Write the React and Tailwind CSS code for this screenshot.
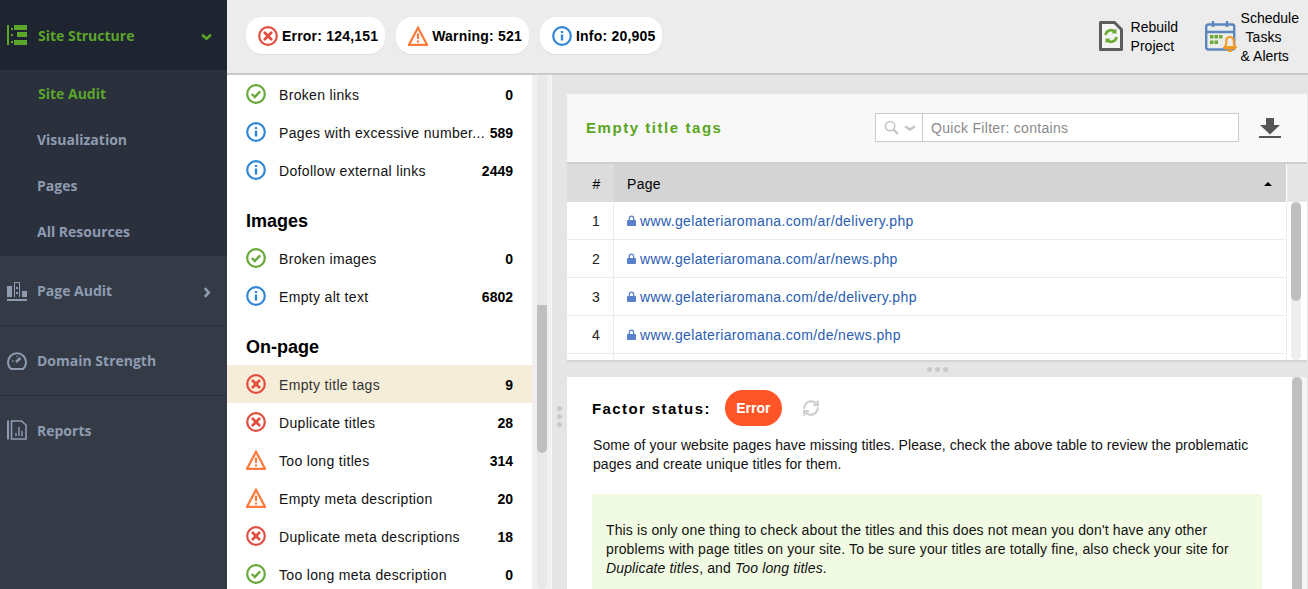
import React from 'react';
import { RefreshCw } from 'lucide-react';

const arial = "font-['Liberation_Sans',Arial,sans-serif]";
const sideFont = "font-['Open_Sans',sans-serif]";

function ErrorIcon({ className = 'w-5 h-5' }) {
  return (
    <svg viewBox="0 0 20 20" className={className}>
      <circle cx="10" cy="10" r="8.8" fill="none" stroke="#e04f3f" strokeWidth="2.200" />
      <path d="M6.800 6.800l6.400 6.400M13.200 6.800l-6.400 6.400" stroke="#e04f3f" strokeWidth="2.800" strokeLinecap="round" />
    </svg>
  );
}

function WarningIcon({ className = 'w-5 h-5' }) {
  return (
    <svg viewBox="0 0 20 20" className={className}>
      <path d="M10 1.800L1 18.800h18z" fill="none" stroke="#ff7a3a" strokeWidth="2.200" strokeLinejoin="miter" />
      <path d="M10 7.500v5.500M10 14.600v2" stroke="#ff7a3a" strokeWidth="2.200" />
    </svg>
  );
}

function InfoIcon({ className = 'w-5 h-5' }) {
  return (
    <svg viewBox="0 0 20 20" className={className}>
      <circle cx="10" cy="10" r="8.800" fill="none" stroke="#2f87d6" strokeWidth="2.200" />
      <path d="M10 8.600v6M10 5v2" stroke="#2f87d6" strokeWidth="2.400" />
    </svg>
  );
}

function OkIcon({ className = 'w-5 h-5' }) {
  return (
    <svg viewBox="0 0 20 20" className={className}>
      <circle cx="10" cy="10" r="8.800" fill="none" stroke="#68a83a" strokeWidth="2.200" />
      <path d="M5.800 10l3 3 5.400-5.600" fill="none" stroke="#68a83a" strokeWidth="2.400" />
    </svg>
  );
}

const icons = { error: ErrorIcon, warn: WarningIcon, info: InfoIcon, ok: OkIcon };

function StructureIcon() {
  return (
    <svg viewBox="0 0 20 20" className="w-5 h-5 text-[#5aa52a]" fill="currentColor">
      <rect x="0" y="0" width="2" height="20" />
      <rect x="4" y="3" width="2" height="2" />
      <rect x="4" y="9" width="2" height="2" />
      <rect x="4" y="16" width="2" height="2" />
      <rect x="7" y="0" width="13" height="5" />
      <rect x="10" y="7" width="10" height="5" />
      <rect x="7" y="15" width="13" height="5" />
    </svg>
  );
}

function PageAuditIcon() {
  return (
    <svg viewBox="0 0 20 20" className="w-5 h-5 text-[#8e9bb0]" fill="currentColor">
      <rect x="0" y="5" width="5" height="11" />
      <path d="M7 1h6v15h-1V2H8v14H7z" />
      <rect x="9" y="6" width="2" height="2" />
      <rect x="9" y="11" width="2" height="2" />
      <rect x="15" y="10" width="5" height="6" />
      <rect x="0" y="18" width="20" height="2" />
    </svg>
  );
}

function GaugeIcon() {
  return (
    <svg viewBox="0 0 20 20" className="w-5 h-5 text-[#8e9bb0]" fill="none" stroke="currentColor">
      <path d="M4 18A9 9 0 1 1 16 18z" strokeWidth="2" strokeLinejoin="round" />
      <path d="M9 11l4.500-4" strokeWidth="2.400" />
      <path d="M5 10h1.500M10 5v1" strokeWidth="1.400" />
    </svg>
  );
}

function ReportsIcon() {
  return (
    <svg viewBox="0 0 20 20" className="w-5 h-5 text-[#8e9bb0]" fill="none" stroke="currentColor">
      <path d="M1 0.500v19" strokeWidth="2" />
      <path d="M4.500 1h10l4.500 4v14h-14.500z" strokeWidth="1.600" />
      <path d="M9 16v-3M12 16V7M15 16v-5" strokeWidth="1.400" />
    </svg>
  );
}

function Chevron({ down }) {
  return (
    <svg viewBox="0 0 10 10" className={down ? 'w-[11px] h-[11px] mt-[3px] text-[#5aa52a]' : 'w-[11px] h-[11px] mt-[3px] text-[#8e9bb0]'} fill="none" stroke="currentColor" strokeWidth="2.400">
      <path d={down ? 'M1 3.500l4 3.500 4-3.500' : 'M3.500 1l3.500 4-3.500 4'} />
    </svg>
  );
}

function Sidebar() {
  const subs = ['Visualization', 'Pages', 'All Resources'];
  const mains = [
    { label: 'Page Audit', icon: <PageAuditIcon />, arrow: true },
    { label: 'Domain Strength', icon: <GaugeIcon /> },
    { label: 'Reports', icon: <ReportsIcon />, last: true },
  ];
  return (
    <aside className={`w-[227px] shrink-0 bg-[#343b47] text-[14px] font-bold tracking-[0px] ${sideFont}`}>
      <div className="h-[70px] bg-[#1f2431] flex items-center pl-[7px] pr-[15px]">
        <StructureIcon />
        <span className="ml-[11px] text-[#5aa52a] flex-1">Site Structure</span>
        <Chevron down />
      </div>
      <div className="bg-[#2a303c] h-[186px]">
        <div className="h-[46px] flex items-center pl-[38px] text-[#5aa52a]">Site Audit</div>
        {subs.map((s) => (
          <div key={s} className="h-[46px] flex items-center pl-[37px] text-[#8e9bb0]">{s}</div>
        ))}
      </div>
      {mains.map((m) => (
        <div key={m.label} className={`h-[70px] flex items-center pl-[7px] pr-[15px] text-[#8e9bb0] ${m.last ? 'pb-[2px]' : 'border-b border-[#2a303c]'}`}>
          {m.icon}
          <span className="ml-[10px] flex-1">{m.label}</span>
          {m.arrow && <Chevron />}
        </div>
      ))}
    </aside>
  );
}

function Chip({ icon, text }) {
  const Icon = icons[icon];
  return (
    <div className="h-[37px] bg-white rounded-[16px] flex items-center pl-[12px] pr-[7px] gap-[4px] shadow-[0_1px_1px_rgba(0,0,0,0.06)] text-[14px] font-bold tracking-[0.2px] text-black">
      <Icon />
      <span className="pt-[2px]">{text}</span>
    </div>
  );
}

function TopBar() {
  return (
    <header className="h-[75px] shrink-0 bg-[#ececec] border-b-2 border-[#cacaca] flex items-center pl-[19px] pb-[2px]">
      <div className="flex gap-[11px]">
        <Chip icon="error" text="Error: 124,151" />
        <Chip icon="warn" text="Warning: 521" />
        <Chip icon="info" text="Info: 20,905" />
      </div>
      <div className="ml-auto flex items-center text-[14px] leading-[19px] text-black">
        <svg viewBox="0 0 24 30" className="w-[24px] h-[30px]">
          <path d="M1.500 1.500h14l7 7v20h-21z" fill="#f4f4f4" stroke="#5c5c5c" strokeWidth="3" strokeLinejoin="round" />
          <path d="M6.500 14a5.500 5.500 0 0 1 9.500-3" fill="none" stroke="#6aaa35" strokeWidth="2.600" />
          <path d="M17.500 7.500v5h-5z" fill="#6aaa35" />
          <path d="M17.500 16a5.500 5.500 0 0 1-9.500 3" fill="none" stroke="#6aaa35" strokeWidth="2.600" />
          <path d="M6.500 22.500v-5h5z" fill="#6aaa35" />
        </svg>
        <div className="ml-[8px] w-[74px] pt-[2px]">Rebuild<br />Project</div>
        <svg viewBox="0 0 32 32" className="w-[32px] h-[32px]">
          <rect x="1.200" y="4.500" width="28" height="25" rx="2" fill="none" stroke="#5b86bd" strokeWidth="2.400" />
          <path d="M1 12h29M8 1v6M22 1v6" stroke="#5b86bd" strokeWidth="2.400" />
          <rect x="5" y="15" width="3.500" height="3.500" fill="#6aaa35" />
          <rect x="9.500" y="15" width="3.500" height="3.500" fill="#6aaa35" />
          <rect x="14" y="15" width="3.500" height="3.500" fill="#6aaa35" />
          <rect x="5" y="20.500" width="3.500" height="3.500" fill="#6aaa35" />
          <rect x="9.500" y="20.500" width="3.500" height="3.500" fill="#6aaa35" />
          <path d="M25 17c3 0 3.800 2 3.800 4.500v3l1.700 2.500h-11l1.700-2.500v-3c0-2.500.8-4.500 3.800-4.500z" fill="#ececec" stroke="#f59a23" strokeWidth="2" />
          <path d="M19 28.500h12M23 31h4" stroke="#f59a23" strokeWidth="2" />
        </svg>
        <div className="ml-[4px] mr-[9px] pt-[4px]">
          <div>Schedule</div>
          <div className="pl-[5px]">Tasks</div>
          <div>&amp; Alerts</div>
        </div>
      </div>
    </header>
  );
}

const groups = [
  {
    rows: [
      ['ok', 'Broken links', '0'],
      ['info', 'Pages with excessive number...', '589'],
      ['info', 'Dofollow external links', '2449'],
    ],
  },
  {
    title: 'Images',
    rows: [
      ['ok', 'Broken images', '0'],
      ['info', 'Empty alt text', '6802'],
    ],
  },
  {
    title: 'On-page',
    rows: [
      ['error', 'Empty title tags', '9', true],
      ['error', 'Duplicate titles', '28'],
      ['warn', 'Too long titles', '314'],
      ['warn', 'Empty meta description', '20'],
      ['error', 'Duplicate meta descriptions', '18'],
      ['ok', 'Too long meta description', '0'],
    ],
  },
];

function FactorList() {
  return (
    <div className="w-[325px] shrink-0 flex bg-[#f0f0f0] border-r border-[#f8f8f8]">
      <div className="w-[305px] bg-white overflow-hidden">
        {groups.map((g, i) => (
          <div key={i}>
            {g.title && (
              <div className="h-[50px] pl-[19px] pb-[7px] flex items-end text-[18px] leading-[21px] font-bold text-black">{g.title}</div>
            )}
            {g.rows.map(([icon, label, n, active]) => {
              const Icon = icons[icon];
              return (
                <div key={label} className={`h-[38px] flex items-center pl-[19px] pr-[19px] text-[14px] ${active ? 'bg-[#f5edd8]' : ''}`}>
                  <Icon />
                  <span className={`ml-[13px] flex-1 pt-[2px] tracking-[0.33px] ${active ? 'text-[#333]' : 'text-[#111]'}`}>{label}</span>
                  <span className="pt-[2px] font-bold text-black">{n}</span>
                </div>
              );
            })}
          </div>
        ))}
      </div>
      <div className="ml-[5px] w-[10px] h-full rounded-[5px] bg-[#e9e9e9] flex flex-col">
        <div className="h-[230px] shrink-0" />
        <div className="h-[148px] shrink-0 bg-[#bfbfbf] rounded-b-[5px]" />
      </div>
    </div>
  );
}

const pages = ['ar/delivery.php', 'ar/news.php', 'de/delivery.php', 'de/news.php'];

function PagesTable() {
  return (
    <section className="h-[268px] shrink-0 bg-white border-b-2 border-[#d4d4d4] flex flex-col overflow-hidden">
      <div className="h-[70px] shrink-0 bg-[#f8f8f8] border-b-2 border-[#cfcfcf] flex items-center pl-[19px] pb-[1px]">
        <h2 className="flex-1 pt-[2px] text-[15px] font-bold tracking-[1.550px] text-[#5aa51e]">Empty title tags</h2>
        <div className="w-[364px] h-[29px] bg-white border border-[#cccccc] flex items-center">
          <div className="w-[47px] h-[27px] shrink-0 border-r border-[#cccccc] flex items-center pl-[8px] gap-[5px]">
            <svg viewBox="0 0 16 16" className="w-[15px] h-[15px]" fill="none" stroke="#c4c4c4">
              <circle cx="6.500" cy="6.500" r="5" strokeWidth="1.600" />
              <path d="M10 10l5 5" strokeWidth="2.400" />
            </svg>
            <svg viewBox="0 0 10 10" className="w-[12px] h-[12px]" fill="none" stroke="#c4c4c4" strokeWidth="2">
              <path d="M1 3.500l4 3 4-3" />
            </svg>
          </div>
          <span className="ml-[8px] pt-[2px] text-[14px] tracking-[0.300px] text-[#8a8a8a]">Quick Filter: contains</span>
        </div>
        <svg viewBox="0 0 22 20" className="ml-[20px] mr-[26px] w-[22px] h-[20px]" fill="#555555">
          <path d="M7 0h8v7h6l-10 9.500L1 7h6z" />
          <rect x="0" y="18" width="22" height="2" />
        </svg>
      </div>
      <div className="h-[38px] shrink-0 flex text-[14px] text-black">
        <div className="w-[47px] bg-[#dcdcdc] flex items-center justify-center pl-[12px] pt-[2px]">#</div>
        <div className="flex-1 bg-[#d4d4d4] flex items-center pl-[13px] pr-[14px] pt-[2px]">
          <span className="flex-1 tracking-[0.3px]">Page</span>
          <svg viewBox="0 0 8 4" className="w-[8px] h-[4px]"><path d="M0 4l4-4 4 4z" fill="#000" /></svg>
        </div>
        <div className="w-[21px] bg-[#e6e6e6] border-l border-white" />
      </div>
      <div className="flex-1 flex min-h-0">
        <div className="flex-1 min-w-0">
          {[...pages, null].map((p, i) => (
            <div key={i} className="h-[38px] flex text-[14px] border-b border-[#ececec]">
              <div className="w-[47px] border-r border-[#ececec] flex items-center justify-center pl-[12px] pt-[2px] text-[#222]">{p && i + 1}</div>
              {p && (
                <div className="flex-1 flex items-center pl-[13px] text-[#2a5db0]">
                  <svg viewBox="0 0 9 11" className="w-[9px] h-[11px]" fill="#5a82cc">
                    <path d="M1.700 5V3.200a2.800 2.800 0 0 1 5.600 0V5h-1.300V3.200a1.500 1.500 0 0 0-3 0V5z" />
                    <rect x="0" y="5" width="9" height="6" rx="0.800" />
                  </svg>
                  <span className="ml-[4px] pt-[2px] tracking-[0.36px]">www.gelateriaromana.com/{p}</span>
                </div>
              )}
            </div>
          ))}
        </div>
        <div className="w-[21px] shrink-0 border-l border-[#ececec] pl-[4px] pr-[6px]">
          <div className="w-[10px] h-full rounded-[5px] bg-[#eeeeee]">
            <div className="h-[99px] bg-[#bfbfbf] rounded-[5px]" />
          </div>
        </div>
      </div>
    </section>
  );
}

function Details() {
  return (
    <section className="flex-1 min-h-0 flex bg-white overflow-hidden">
      <div className="flex-1 min-w-0 pl-[25px] pr-[30px] pt-[13px] text-[14px] leading-[19px] text-[#111]">
        <div className="h-[36px] flex items-center">
          <span className="font-bold text-[15px] tracking-[1.400px] text-black">Factor status:</span>
          <span className="ml-[14px] w-[57px] h-[36px] rounded-[18px] bg-[#ff5527] text-white font-bold flex items-center justify-center pt-[1px]">Error</span>
          <RefreshCw className="ml-[20px] w-[18px] h-[18px] text-[#cfcfcf]" strokeWidth={3} />
        </div>
        <p className="mt-[10px] ml-[1px] tracking-[0.06px]">
          Some of your website pages have missing titles. Please, check the above table to review the problematic pages and create unique titles for them.
        </p>
        <div className="mt-[20px] bg-[#f1fbe3] pl-[14px] pr-[20px] pt-[27px] pb-[20px] tracking-[0.13px]">
          This is only one thing to check about the titles and this does not mean you don't have any other problems with page titles on your site. To be sure your titles are totally fine, also check your site for <em>Duplicate titles</em>, and <em>Too long titles</em>.
        </div>
      </div>
      <div className="w-[15px] shrink-0 bg-[#f4f4f4]">
        <div className="w-[10px] h-full bg-[#bfbfbf] rounded-t-[5px]" />
      </div>
    </section>
  );
}

function Dots({ vertical }) {
  return (
    <div className={`flex gap-[3px] ${vertical ? 'flex-col' : ''}`}>
      <span className="w-[5px] h-[5px] rounded-full bg-[#c8c8c8]" />
      <span className="w-[5px] h-[5px] rounded-full bg-[#c8c8c8]" />
      <span className="w-[5px] h-[5px] rounded-full bg-[#c8c8c8]" />
    </div>
  );
}

export default function App() {
  return (
    <div className={`w-[1308px] h-[589px] flex overflow-hidden ${arial}`}>
      <Sidebar />
      <div className="flex-1 min-w-0 flex flex-col">
        <TopBar />
        <div className="flex-1 min-h-0 flex">
          <FactorList />
          <div className="w-[15px] shrink-0 bg-[#e5e5e5] flex justify-center pt-[331px]">
            <Dots vertical />
          </div>
          <div className="flex-1 min-w-0 bg-[#e5e5e5] flex flex-col pt-[19px] pr-[1px]">
            <PagesTable />
            <div className="h-[15px] shrink-0 flex items-center justify-center">
              <Dots />
            </div>
            <Details />
          </div>
        </div>
      </div>
    </div>
  );
}
